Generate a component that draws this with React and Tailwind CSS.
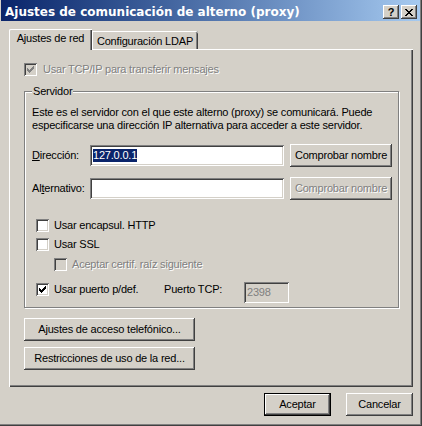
import React from "react";

const raised =
  "shadow-[inset_-1px_-1px_#404040,inset_1px_1px_#fff,inset_-2px_-2px_#808080,inset_2px_2px_#d4d0c8]";
const sunken =
  "shadow-[inset_1px_1px_#808080,inset_-1px_-1px_#fff,inset_2px_2px_#404040,inset_-2px_-2px_#d4d0c8]";
const grayText = "text-[#808080] [text-shadow:1px_1px_0_#fff]";

function CheckMark({ color }) {
  // classic 7x7 windows tick, one column at a time
  return (
    <svg width="13" height="13" viewBox="0 0 13 13" shapeRendering="crispEdges" className="absolute left-0 top-0">
      <path
        fill={color}
        d="M3 5h1v3h-1z M4 6h1v3h-1z M5 7h1v3h-1z M6 6h1v3h-1z M7 5h1v3h-1z M8 4h1v3h-1z M9 3h1v3h-1z"
      />
    </svg>
  );
}

function Check({ checked, disabled }) {
  return (
    <div
      className={`relative w-[13px] h-[13px] shrink-0 ${sunken} ${
        disabled ? "bg-[#d4d0c8]" : "bg-white"
      }`}
    >
      {checked && <CheckMark color={disabled ? "#808080" : "#000"} />}
    </div>
  );
}

function Btn({ children, className = "", disabled, isDefault }) {
  return (
    <button
      type="button"
      className={`flex items-center justify-center leading-[13px] bg-[#d4d0c8] ${raised} ${
        isDefault ? "border border-black" : ""
      } ${disabled ? grayText : "text-black"} ${className}`}
    >
      {children}
    </button>
  );
}

function CaptionBtn({ children }) {
  return (
    <div className={`w-[16px] h-[14px] bg-[#d4d0c8] flex items-center justify-center ${raised}`}>
      {children}
    </div>
  );
}

function CloseGlyph() {
  return (
    <svg width="8" height="7" viewBox="0 0 8 7" shapeRendering="crispEdges" className="mt-[1px]">
      <path
        fill="#000"
        d="M0 0h2v1h-2z M6 0h2v1h-2z M1 1h2v1h-2z M5 1h2v1h-2z M2 2h4v1h-4z M3 3h2v1h-2z M2 4h4v1h-4z M1 5h2v1h-2z M5 5h2v1h-2z M0 6h2v1h-2z M6 6h2v1h-2z"
      />
    </svg>
  );
}

function Field({ children, disabled, className = "" }) {
  return (
    <div
      className={`flex items-center pl-[3px] h-[21px] ${sunken} ${
        disabled ? "bg-[#d4d0c8] text-[#808080]" : "bg-white"
      } ${className}`}
    >
      {children}
    </div>
  );
}

export default function App() {
  return (
    <div className="w-[422px] h-[426px] bg-[#d4d0c8] flex flex-col font-['Liberation_Sans',Arial,sans-serif] text-[11px] leading-[13px] tracking-[-0.2px] text-black select-none shadow-[inset_-1px_-1px_#404040,inset_-2px_-2px_#808080]">
      {/* title bar */}
      <div className="h-[21px] ml-[1px] mr-[2px] pt-[3px] pl-[4px] pr-[3px] flex items-center justify-between bg-linear-to-r from-[#0a246a] to-[#a6caf0]">
        <span className="text-white font-bold text-[12px] tracking-normal font-['DejaVu_Sans',sans-serif] whitespace-nowrap">
          Ajustes de comunicación de alterno (proxy)
        </span>
        <div className="flex gap-[2px]">
          <CaptionBtn>
            <span className="font-bold text-[11px] leading-[11px]">?</span>
          </CaptionBtn>
          <CaptionBtn>
            <CloseGlyph />
          </CaptionBtn>
        </div>
      </div>

      {/* tabs */}
      <div className="flex items-end h-[21px] mt-[8px] ml-[9px] relative z-10">
        <div className="w-[83px] h-[21px] pt-[3px] flex justify-center bg-[#d4d0c8] rounded-tl-[2px] shadow-[inset_1px_0_#fff,inset_0_1px_#fff,inset_-1px_0_#404040,inset_-2px_0_#808080]">
          Ajustes de red
        </div>
        <div className="w-[106px] h-[18px] mb-[1px] pt-[4px] flex justify-center bg-[#d4d0c8] rounded-tr-[2px] shadow-[inset_1px_0_#fff,inset_0_1px_#fff,inset_-1px_0_#404040,inset_-2px_0_#808080]">
          Configuración LDAP
        </div>
      </div>

      {/* tab panel */}
      <div className="w-[404px] h-[338px] -mt-[1px] ml-[9px] pt-[14px] pl-[15px] flex flex-col shadow-[inset_1px_1px_#fff,inset_-1px_-1px_#404040,inset_-2px_-2px_#808080]">
        <div className="flex items-center h-[13px]">
          <Check checked disabled />
          <span className={`ml-[6px] whitespace-nowrap ${grayText}`}>
            Usar TCP/IP para transferir mensajes
          </span>
        </div>

        {/* group box */}
        <div className="relative mt-[15px] w-[375px] h-[217px] border border-[#808080] shadow-[inset_1px_1px_#fff,1px_1px_0_#fff] pl-[7px] flex flex-col">
          <span className="absolute left-[7px] -top-[7px] px-[1px] bg-[#d4d0c8]">Servidor</span>

          <p className="pt-[14px] whitespace-nowrap">
            Este es el servidor con el que este alterno (proxy) se comunicará. Puede
            <br />
            especificarse una dirección IP alternativa para acceder a este servidor.
          </p>

          <div className="flex items-center h-[23px] mt-[12px]">
            <span className="w-[58px]">
              <span className="underline underline-offset-[1px]">D</span>irección:
            </span>
            <Field className="w-[194px]">
              <span className="bg-[#0a246a] text-white leading-[13px]">127.0.0.1</span>
            </Field>
            <Btn className="ml-[6px] w-[102px] h-[23px]">Comprobar nombre</Btn>
          </div>

          <div className="flex items-center h-[23px] mt-[10px]">
            <span className="w-[58px]">
              Al<span className="underline underline-offset-[1px]">t</span>ernativo:
            </span>
            <Field className="w-[194px]" />
            <Btn disabled className="ml-[6px] w-[102px] h-[23px]">
              Comprobar nombre
            </Btn>
          </div>

          <div className="flex items-center h-[13px] mt-[19px] ml-[4px]">
            <Check />
            <span className="ml-[5px]">Usar encapsul. HTTP</span>
          </div>
          <div className="flex items-center h-[13px] mt-[6px] ml-[4px]">
            <Check />
            <span className="ml-[5px]">Usar SSL</span>
          </div>
          <div className="flex items-center h-[13px] mt-[7px] ml-[22px]">
            <Check disabled />
            <span className={`ml-[5px] ${grayText}`}>Aceptar certif. raíz siguiente</span>
          </div>
          <div className="flex items-start h-[19px] mt-[12px] ml-[4px]">
            <div className="flex items-center h-[13px]">
              <Check checked />
              <span className="ml-[5px] w-[110px]">Usar puerto p/def.</span>
            </div>
            <span className="leading-[13px] w-[80px]">Puerto TCP:</span>
            <Field disabled className="-mt-[1px] w-[45px] h-[20px]">
              2398
            </Field>
          </div>
        </div>

        <Btn className="mt-[10px] w-[171px] h-[23px]">Ajustes de acceso telefónico...</Btn>
        <Btn className="mt-[6px] w-[171px] h-[23px]">Restricciones de uso de la red...</Btn>
      </div>

      {/* dialog buttons */}
      <div className="flex justify-end gap-[15px] mt-[6px] pr-[9px]">
        <Btn isDefault className="w-[67px] h-[23px]">
          Aceptar
        </Btn>
        <Btn className="w-[67px] h-[23px]">Cancelar</Btn>
      </div>
    </div>
  );
}
